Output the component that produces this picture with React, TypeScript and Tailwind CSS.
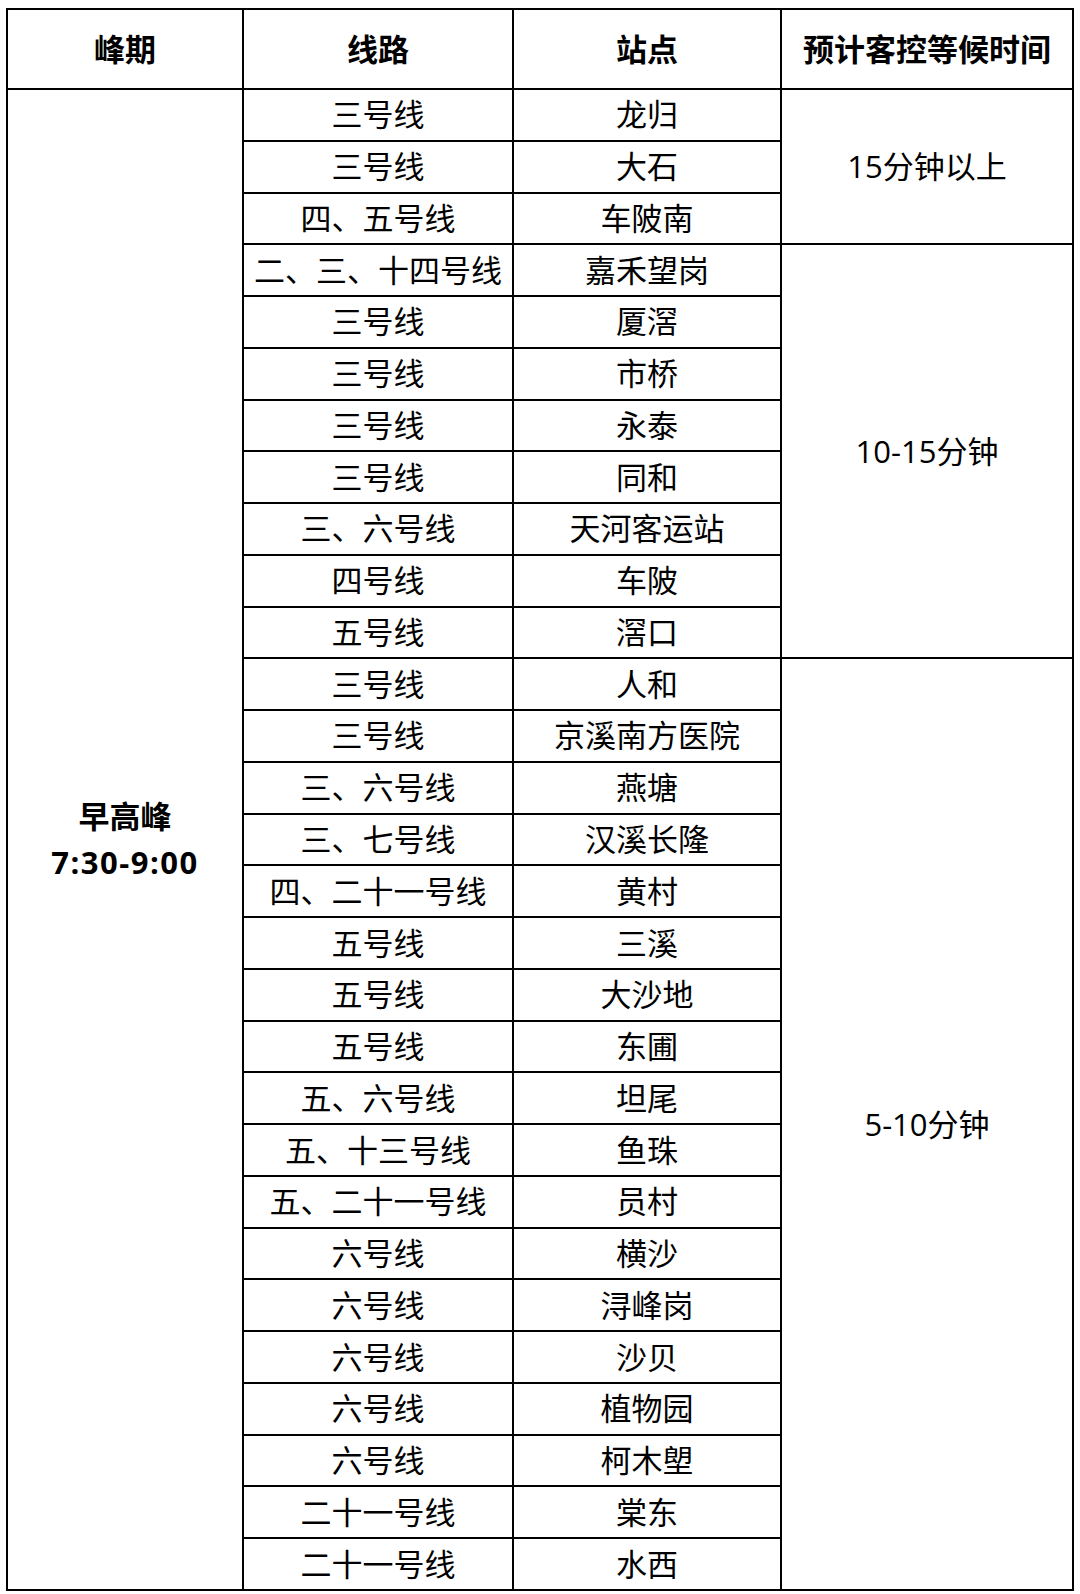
const lines: [string, string][] = [
  ["三号线", "龙归"],
  ["三号线", "大石"],
  ["四、五号线", "车陂南"],
  ["二、三、十四号线", "嘉禾望岗"],
  ["三号线", "厦滘"],
  ["三号线", "市桥"],
  ["三号线", "永泰"],
  ["三号线", "同和"],
  ["三、六号线", "天河客运站"],
  ["四号线", "车陂"],
  ["五号线", "滘口"],
  ["三号线", "人和"],
  ["三号线", "京溪南方医院"],
  ["三、六号线", "燕塘"],
  ["三、七号线", "汉溪长隆"],
  ["四、二十一号线", "黄村"],
  ["五号线", "三溪"],
  ["五号线", "大沙地"],
  ["五号线", "东圃"],
  ["五、六号线", "坦尾"],
  ["五、十三号线", "鱼珠"],
  ["五、二十一号线", "员村"],
  ["六号线", "横沙"],
  ["六号线", "浔峰岗"],
  ["六号线", "沙贝"],
  ["六号线", "植物园"],
  ["六号线", "柯木塱"],
  ["二十一号线", "棠东"],
  ["二十一号线", "水西"],
];

// wait groups, keyed by the first row they cover
const waits: { start: number; span: string; label: string }[] = [
  { start: 0, span: "row-span-3", label: "15分钟以上" },
  { start: 3, span: "row-span-8", label: "10-15分钟" },
  { start: 11, span: "row-span-18", label: "5-10分钟" },
];

const rowStart = ["row-start-2", "row-start-3", "row-start-4", "row-start-5", "row-start-6", "row-start-7", "row-start-8", "row-start-9", "row-start-10", "row-start-11", "row-start-12", "row-start-13", "row-start-14", "row-start-15", "row-start-16", "row-start-17", "row-start-18", "row-start-19", "row-start-20", "row-start-21", "row-start-22", "row-start-23", "row-start-24", "row-start-25", "row-start-26", "row-start-27", "row-start-28", "row-start-29", "row-start-30"];

const cell = "flex items-center justify-center bg-white text-[31px] leading-none text-black";

export default function App() {
  return (
    <div
      className="min-h-screen bg-white pt-[8px] pl-[6px]"
      style={{ fontFamily: '"Open Sans", "Noto Sans CJK SC", sans-serif' }}
    >
      <div className="grid h-[1583px] w-[1068px] grid-cols-[234px_268px_266px_1fr] grid-rows-[78px_repeat(29,1fr)] gap-[2px] bg-black p-[2px]">
        <div className={`${cell} font-bold`}>峰期</div>
        <div className={`${cell} font-bold`}>线路</div>
        <div className={`${cell} font-bold`}>站点</div>
        <div className={`${cell} font-bold`}>预计客控等候时间</div>

        <div className="col-start-1 row-span-29 row-start-2 flex flex-col items-center justify-center gap-[15px] bg-white text-[31px] font-bold leading-none text-black">
          <span>早高峰</span>
          <span className="tracking-[1.5px]">7:30-9:00</span>
        </div>

        {lines.map(([line], i) => (
          <div key={`l${i}`} className={`${cell} col-start-2 ${rowStart[i]}`}>
            {line}
          </div>
        ))}
        {lines.map(([, station], i) => (
          <div key={`s${i}`} className={`${cell} col-start-3 ${rowStart[i]}`}>
            {station}
          </div>
        ))}
        {waits.map((w) => (
          <div key={w.start} className={`${cell} col-start-4 ${rowStart[w.start]} ${w.span}`}>
            {w.label}
          </div>
        ))}
      </div>
    </div>
  );
}
